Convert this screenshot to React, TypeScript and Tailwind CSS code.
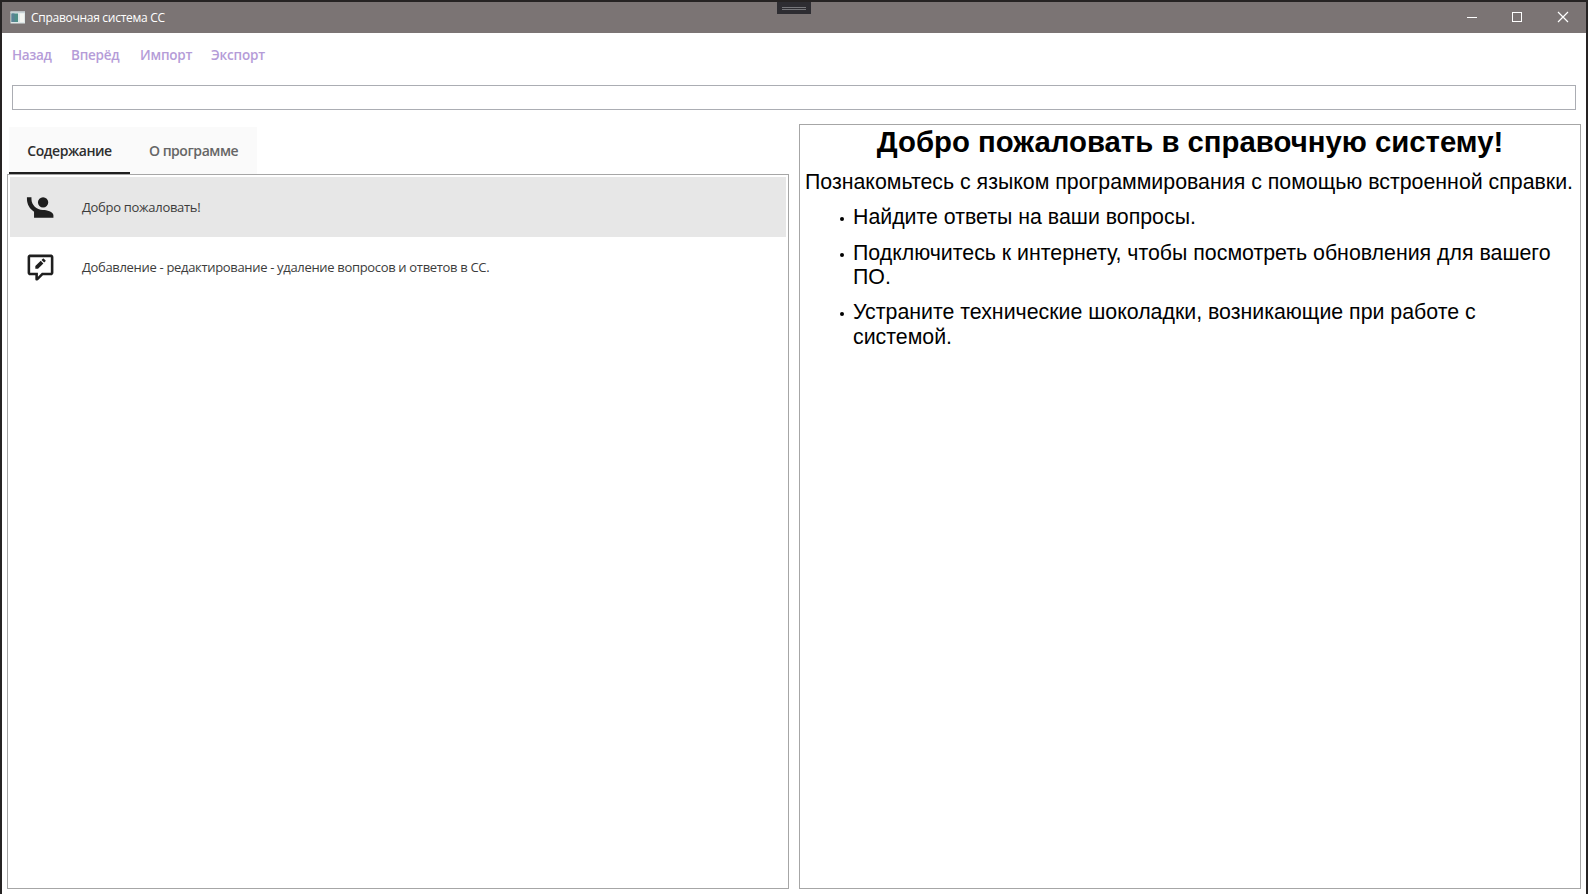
import React from "react";

const menu = [
  { label: "Назад", cls: "w-[59px] tracking-[-0.35px]" },
  { label: "Вперёд", cls: "w-[69px] tracking-[-0.25px]" },
  { label: "Импорт", cls: "w-[71px] tracking-[-0.2px]" },
  { label: "Экспорт", cls: "w-[71px] tracking-[-0.2px]" },
];

const greetingIcon =
  "M1.5,4V5.5C1.5,9.65 3.71,13.28 7,15.3V20H22V18C22,15.34 16.67,14 14,14C14,14 13.83,14 13.75,14C9,14 5,10 5,5.5V4M14,4A4,4 0 0,0 10,8A4,4 0 0,0 14,12A4,4 0 0,0 18,8A4,4 0 0,0 14,4Z";
const commentEditIcon =
  "M20 2C21.1 2 22 2.9 22 4V16C22 17.1 21.1 18 20 18H13.9L10.2 21.71C10 21.9 9.75 22 9.5 22H9C8.45 22 8 21.55 8 21V18H4C2.89 18 2 17.11 2 16V4C2 2.9 2.9 2 4 2H20M10 19.08L13.08 16H20V4H4V16H10V19.08M15.84 7.2C16.05 7 16.05 6.63 15.84 6.43L14.57 5.16C14.37 4.95 14 4.95 13.8 5.16L12.78 6.18L14.82 8.22L15.84 7.2M8 10.91V13H10.08L14.23 8.83L12.19 6.75L8 10.91Z";

const articleItems = [
  { lines: ["Найдите ответы на ваши вопросы."], cls: "mt-[10px] leading-[25px]" },
  { lines: ["Подключитесь к интернету, чтобы посмотреть обновления для вашего", "ПО."], cls: "mt-[11px] leading-[24px]" },
  { lines: ["Устраните технические шоколадки, возникающие при работе с", "системой."], cls: "mt-[11px] leading-[25px]" },
];

function TitleBar() {
  return (
    <header className="relative flex h-[31px] shrink-0 items-center bg-[#7b7474] text-white">
      <svg className="ml-2 h-4 w-4" viewBox="0 0 16 16">
        <rect x="0.5" y="1.5" width="14.5" height="12" fill="#dfe8e8" />
        <rect x="0.5" y="1.5" width="14.5" height="1.5" fill="#c8d2d6" />
        <rect x="1.5" y="3.5" width="6.5" height="8.5" fill="#4f8f88" />
        <rect x="1.5" y="3.5" width="3" height="8.5" fill="#5b8296" />
        <rect x="10" y="3.5" width="4" height="8.5" fill="#f4f6f2" />
      </svg>
      <span className="ml-[5px] text-[12px] leading-4 tracking-[-0.28px] whitespace-nowrap">Справочная система СС</span>
      <div className="absolute top-0 left-[775px] flex h-3 w-[34px] flex-col items-center justify-center gap-px bg-[#2e2d32]">
        <span className="h-px w-6 bg-[#77777b]" />
        <span className="h-px w-6 bg-[#77777b]" />
      </div>
      <svg className="ml-auto h-[31px] w-[137px]" viewBox="0 0 137 31" fill="none" stroke="#fff" shapeRendering="crispEdges">
        <path d="M18 15.5h10" />
        <path d="M63.5 10.5h9v9h-9z" />
        <path d="M109 10l10 10M119 10l-10 10" shapeRendering="auto" strokeWidth="1.2" />
      </svg>
    </header>
  );
}

function ListRow({ icon, children, selected, cls }: { icon: string; children: React.ReactNode; selected?: boolean; cls: string }) {
  return (
    <li className={`flex h-[60px] items-center ${selected ? "bg-[#e7e7e7]" : ""}`}>
      <svg className="ml-[15px] h-[31px] w-[31px]" viewBox="0 0 24 24" fill="#1f1f1f">
        <path d={icon} />
      </svg>
      <span className={`ml-[26px] text-[13px] leading-5 whitespace-nowrap text-[#3c3c3c] ${cls}`}>{children}</span>
    </li>
  );
}

export default function App() {
  return (
    <div className="flex h-[894px] w-[1588px] flex-col overflow-hidden bg-[#262323] pt-[2px] pr-[2px] pl-[2px] font-['Open_Sans','Noto_Sans',sans-serif]">
      <TitleBar />
      <div className="flex min-h-0 flex-1 flex-col bg-white">
        <nav className="flex h-[52px] shrink-0 items-center pb-[7px] pl-[10px] text-[13.5px] font-semibold text-[#b59cd8]">
          {menu.map((m) => (
            <a key={m.label} className={`whitespace-nowrap ${m.cls}`}>{m.label}</a>
          ))}
        </nav>
        <input className="mr-[10px] ml-[10px] h-[25px] shrink-0 border border-[#abadb3] bg-white px-1 text-sm outline-none" />
        <main className="flex min-h-0 flex-1 gap-[10px] pt-[14px] pr-[5px] pb-[5px] pl-[5px]">
          <section className="flex w-[782px] shrink-0 flex-col">
            <div className="mt-[3px] ml-[2px] flex h-[47px] w-[248px] shrink-0 bg-[#fafafa] text-[14px] tracking-[-0.45px]">
              <button className="h-full w-[121px] border-b-2 border-[#1f1f1f] pt-[2px] text-center font-semibold text-[#2e2e2e]">Содержание</button>
              <button className="h-full w-[127px] text-center font-semibold text-[#666]">О программе</button>
            </div>
            <ul className="flex-1 border border-[#a6a6a6] px-[2px] pt-[2px]">
              <ListRow icon={greetingIcon} selected cls="tracking-[-0.3px]">Добро пожаловать!</ListRow>
              <ListRow icon={commentEditIcon} cls="tracking-[-0.325px]">Добавление - редактирование - удаление вопросов и ответов в СС.</ListRow>
            </ul>
          </section>
          <article className="flex-1 border border-[#a6a6a6] px-[5px] font-['Liberation_Sans',Arial,sans-serif] text-[21.33px] text-black">
            <h1 className="text-center text-[29.33px] leading-[34px] font-bold whitespace-nowrap">Добро пожаловать в справочную систему!</h1>
            <p className="mt-[11px] leading-[25px] whitespace-nowrap">Познакомьтесь с языком программирования с помощью встроенной справки.</p>
            <ul>
              {articleItems.map(({ lines, cls }) => (
                <li key={lines[0]} className={`flex pl-[35px] ${cls}`}>
                  <span className="mt-3 mr-[9px] h-1 w-1 shrink-0 rounded-full bg-black" />
                  <div className="whitespace-nowrap">
                    {lines.map((l) => (
                      <div key={l}>{l}</div>
                    ))}
                  </div>
                </li>
              ))}
            </ul>
          </article>
        </main>
      </div>
    </div>
  );
}
